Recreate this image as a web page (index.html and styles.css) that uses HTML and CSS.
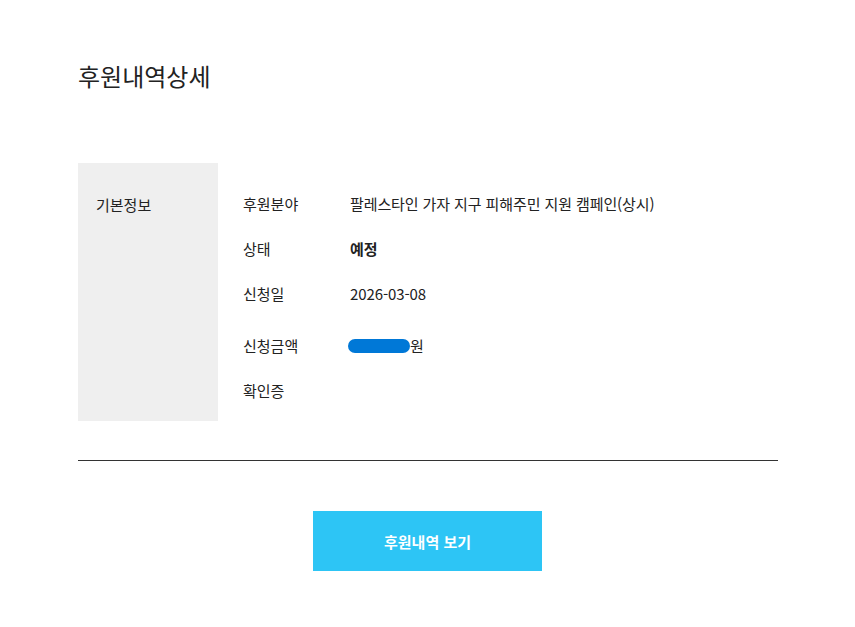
FILE: index.html
```html
<!DOCTYPE html>
<html lang="ko">
<head>
<meta charset="utf-8">
<title>후원내역상세</title>
<link rel="stylesheet" href="styles.css">
</head>
<body>
<div class="page">
  <h1 class="title">후원내역상세</h1>
  <section class="info">
    <div class="info-head">기본정보</div>
    <div class="info-body">
      <div class="row"><div class="label">후원분야</div><div class="value">팔레스타인 가자 지구 피해주민 지원 캠페인(상시)</div></div>
      <div class="row"><div class="label">상태</div><div class="value bold">예정</div></div>
      <div class="row"><div class="label">신청일</div><div class="value">2026-03-08</div></div>
      <div class="row row-amount"><div class="label">신청금액</div><div class="value"><span class="masked"></span>원</div></div>
      <div class="row"><div class="label">확인증</div><div class="value"></div></div>
    </div>
  </section>
  <hr class="divider">
  <div class="actions">
    <a class="btn" href="#">후원내역 보기</a>
  </div>
</div>
</body>
</html>
```
FILE: styles.css
```css
* { box-sizing: border-box; }
html, body { margin: 0; padding: 0; background: #fff; }
body {
  font-family: "Noto Sans CJK KR", "Noto Sans", sans-serif;
  color: #222;
  font-size: 15px;
}
.page {
  width: 700px;
  margin-left: 78px;
  padding-top: 59px;
}
.title {
  margin: 0;
  font-size: 24px;
  font-weight: 400;
  line-height: 34px;
  color: #222;
}
.info {
  margin-top: 70px;
  display: grid;
  grid-template-columns: 140px 1fr;
}
.info-head {
  background: #efefef;
  padding: 32px 0 0 18px;
  line-height: 20px;
}
.info-body {
  padding: 18px 0 8px 25px;
}
.row {
  display: flex;
  align-items: center;
  height: 45px;
}
.row-amount { margin-top: 7px; }
.label { width: 107px; }
.value { display: flex; align-items: center; letter-spacing: -0.1px; }
.bold { font-weight: 700; }
.masked {
  display: inline-block;
  width: 62px;
  height: 14px;
  border-radius: 7px;
  background: #0078d7;
  margin-left: -2px;
}
.divider {
  margin: 39px 0 0 0;
  border: 0;
  border-top: 1px solid #333;
  height: 0;
}
.actions {
  display: flex;
  justify-content: center;
  padding-top: 50px;
  padding-right: 1px;
}
.btn {
  display: flex;
  align-items: center;
  justify-content: center;
  width: 229px;
  height: 60px;
  background: #2dc5f5;
  color: #fff;
  text-decoration: none;
  font-weight: 700;
  font-size: 15px;
}
```
